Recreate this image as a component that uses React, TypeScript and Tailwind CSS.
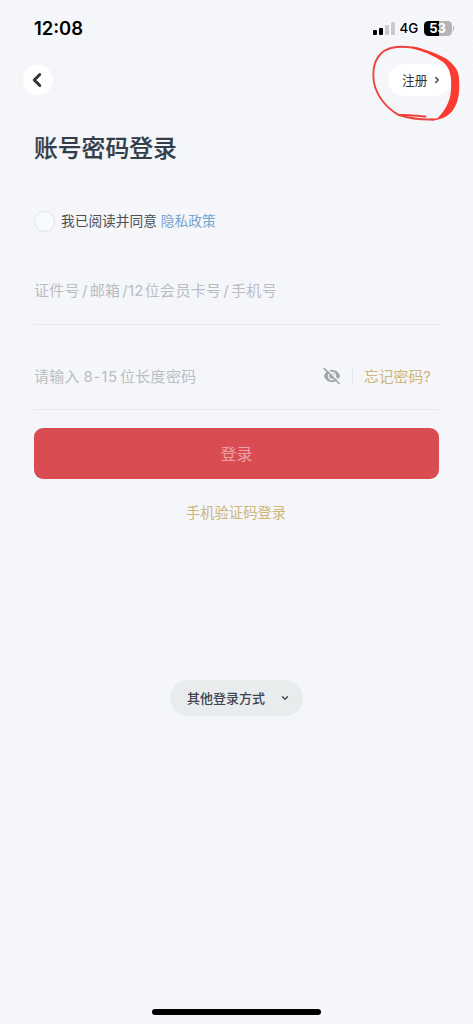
import { useState } from 'react'
import { ChevronDown, ChevronLeft, ChevronRight } from 'lucide-react'

function StatusBar() {
  return (
    <div className="relative flex h-14 items-center justify-between pl-[34px] pr-[19px]">
      <span className="font-['Inter','Liberation_Sans',sans-serif] text-[18.4px] font-semibold leading-none text-black">
        12:08
      </span>
      <div className="flex items-center pt-0.5">
        <div className="mb-0.5 flex h-[13px] items-end gap-[2px]">
          <span className="h-[5px] w-1 rounded-[1px] bg-black" />
          <span className="h-[7px] w-1 rounded-[1px] bg-black" />
          <span className="h-[10px] w-1 rounded-[1px] bg-[#c9cacd]" />
          <span className="h-[13px] w-1 rounded-[1px] bg-[#c9cacd]" />
        </div>
        <span className="ml-[5px] w-[19px] font-['Inter','Liberation_Sans',sans-serif] text-[13.4px] font-medium leading-none text-black">
          4G
        </span>
        <div className="mb-0.5 ml-[5px] flex h-[15px] w-7 items-center justify-center rounded-[4.5px] bg-linear-to-r from-black from-53% to-[#b3b4b7] to-53% font-['Inter','Liberation_Sans',sans-serif] text-[13px] font-bold leading-none text-white">
          53
        </div>
        <span className="mb-0.5 ml-px h-[5px] w-[1.5px] rounded-r-full bg-[#b3b4b7]" />
      </div>
    </div>
  )
}

// faint white contour lines behind the top right corner
function Waves() {
  const lines = Array.from({ length: 13 }, (_, i) => i)
  return (
    <svg className="pointer-events-none absolute right-0 top-0" width="180" height="90" viewBox="0 0 180 90" fill="none">
      {lines.map((i) => (
        <path
          key={i}
          d={`M${8 + i * 3} ${62 + i * 2}C${48 + i * 2} ${28 + i * 4} ${95 + i} ${i * 6} 180 ${i * 6 - 1}`}
          stroke="white"
          strokeWidth={1.5}
          strokeOpacity={0.3}
        />
      ))}
    </svg>
  )
}

// hand-drawn ring around the register button
function RedMark() {
  return (
    <svg className="pointer-events-none absolute right-0 top-10 z-10" width="108" height="90" viewBox="365 40 108 90" fill="none">
      <path
        d="M425.5 116.5C416 115.8 408 115.2 398.5 114.8C388 109 373.3 95 373.3 75C373.3 56 384 46.8 401 46.8C409 46.8 416 47.8 421 49.5"
        stroke="#ee443d"
        strokeWidth="1.9"
        strokeLinecap="round"
        strokeLinejoin="round"
      />
      <path
        d="M399 115C410 118.6 421 119.8 433 119.5"
        stroke="#ee443d"
        strokeWidth="1.9"
        strokeLinecap="round"
      />
      <path
        d="M412 46.5C424 48.8 436 53 445 58C452 62.5 458.4 69 458.9 77C460.2 93 458.5 103 452 111.5C446 118 438 120.5 431 120.5L431 118.6C434 118.7 436.5 118.7 438 117.8C446 109 451.2 101 451.2 85C451.3 75 450 68 443 62C434 55.5 423 51 412 48.4Z"
        fill="#fb3b31"
      />
    </svg>
  )
}

function EyeOff() {
  return (
    <svg className="mb-0.5 mr-px size-[18px]" viewBox="0 0 18 18" fill="none">
      <path d="M0.8 9C2.6 4.9 5.5 2.8 9 2.8S15.4 4.9 17.2 9C15.4 13.1 12.5 15.2 9 15.2S2.6 13.1 0.8 9Z" fill="#a1a4aa" />
      <circle cx="9" cy="9" r="3.5" stroke="#f4f6fa" strokeWidth="1.4" />
      <path d="M2.4 0.6L17.5 15.4" stroke="#f4f6fa" strokeWidth="1.5" />
      <path d="M1.3 1.7L16.1 16.5" stroke="#a1a4aa" strokeWidth="1.7" strokeLinecap="round" />
    </svg>
  )
}

export default function App() {
  const [agreed, setAgreed] = useState(false)

  return (
    <div className="relative flex h-[1024px] w-full flex-col overflow-hidden bg-[#f4f6fa] font-['Inter','Noto_Sans_CJK_SC',sans-serif]">
      <Waves />
      <StatusBar />

      <div className="relative flex h-12 items-center justify-between pl-[23px] pr-[22px]">
        <button className="flex size-[30px] items-center justify-center rounded-full bg-white">
          <ChevronLeft className="-ml-0.5 size-[22px] text-[#303236]" strokeWidth={3.2} />
        </button>
        <button className="flex h-8 w-[63px] items-center rounded-full bg-white pl-[14px] text-[12.7px] text-[#30343a]">
          <span className="mt-0.5">注册</span>
          <ChevronRight className="ml-[5px] size-[10px]" strokeWidth={3} />
        </button>
      </div>
      <RedMark />

      <main className="flex flex-col px-[34px]">
        <h1 className="mt-[27px] text-[23.8px] font-medium leading-9 text-[#333e4a] [-webkit-text-stroke:0.2px]">账号密码登录</h1>

        <div className="mt-[44px] flex h-5 items-center text-[13.7px]">
          <button
            onClick={() => setAgreed(!agreed)}
            className={`mr-1.5 size-[21px] shrink-0 rounded-full border-[1.5px] border-[#e0e4e7] ${agreed ? 'bg-[#d84c52]' : 'bg-[#f8fbfd]'}`}
          />
          <span className="text-[#4d5054]">我已阅读并同意</span>
          <a className="ml-1 text-[#77a5cd]">隐私政策</a>
        </div>

        <div className="mt-[26px] flex h-[68px] items-center border-b border-[#e7e9ed] pt-0.5 text-[15px] tracking-[0.3px] text-[#babdc3]">
          证件号<span className="mx-[2px]">/</span>邮箱<span className="ml-[2px]">/</span>
          <span className="mr-[1px]">12</span>位会员卡号<span className="mx-[2px]">/</span>手机号
        </div>

        <div className="mt-[18px] flex h-[67px] items-center border-b border-[#e7e9ed] pt-0.5 text-[15px] tracking-[0.3px] text-[#babdc3]">
          <span className="flex-1">
            请输入<span className="ml-[3.5px] mr-[2px] tracking-[0.8px]">8-15</span>位长度密码
          </span>
          <EyeOff />
          <span className="mb-0.5 ml-[10px] h-4 w-px bg-[#e1e3e7]" />
          <a className="ml-[11px] w-[75px] text-[14.8px] tracking-normal text-[#cfb578]">忘记密码?</a>
        </div>

        <button className="mt-[18px] h-[51px] rounded-[9px] bg-[#d84c52] text-[16px] text-[#eda0a6]">登录</button>
        <a className="mr-px mt-[24px] self-center text-[14.3px] leading-5 text-[#cfb578]">手机验证码登录</a>

        <button className="mt-[157px] flex h-9 w-[133px] items-center justify-between self-center rounded-full bg-[#e9eced] pl-[17px] pr-[13px] text-[13px] font-medium text-[#3e434d]">
          <span className="mt-0.5">其他登录方式</span>
          <ChevronDown className="size-[10px]" strokeWidth={3} />
        </button>
      </main>

      <div className="mb-[9px] mt-auto h-1.5 w-[169px] self-center rounded-full bg-black" />
    </div>
  )
}
